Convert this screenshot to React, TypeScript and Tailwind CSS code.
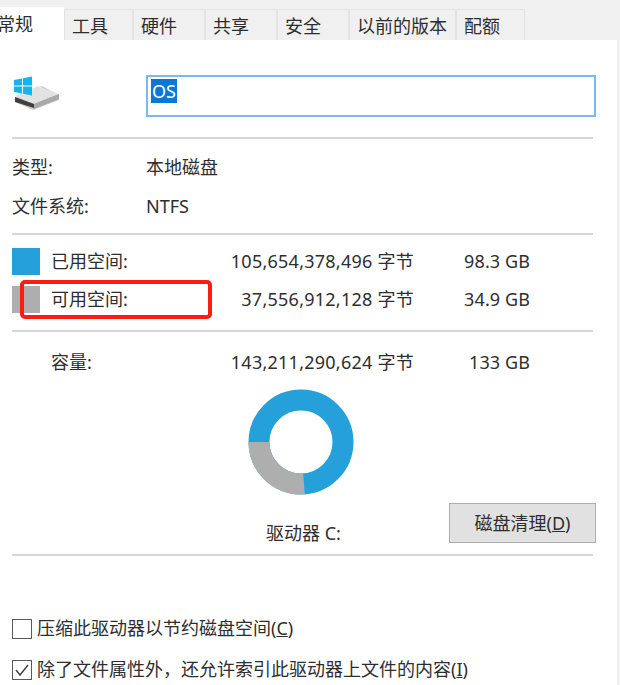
const font = { fontFamily: '"Noto Sans", "Noto Sans CJK SC", sans-serif' };

const tabs = [
  { label: '工具', w: 'w-[69px]' },
  { label: '硬件', w: 'w-[72px]' },
  { label: '共享', w: 'w-[72px]' },
  { label: '安全', w: 'w-[72px]' },
  { label: '以前的版本', w: 'w-[107px]' },
  { label: '配额', w: 'w-[69px]' },
];

function DriveIcon() {
  return (
    <svg width="46" height="34" viewBox="0 0 46 34">
      {/* drive body */}
      <path d="M1 22 L28 10 L45 19 L45 24 L19 34 L1 26 Z" fill="#c9c9c9" />
      <path d="M1 20 L24 10 L45 18 L20 28 Z" fill="#e2e2e2" />
      <path d="M1 21 L20 28 L20 32 L1 26 Z" fill="#3f3f3f" />
      <path d="M20 28 L45 18 L45 23 L20 33 Z" fill="#a9a9a9" />
      {/* windows flag */}
      <path d="M0 4 L8 2.5 L8 9.5 L0 9.5 Z" fill="#14b4ee" />
      <path d="M9 2.3 L18 0.5 L18 9.5 L9 9.5 Z" fill="#14b4ee" />
      <path d="M0 10.5 L8 10.5 L8 17.5 L0 16 Z" fill="#14b4ee" />
      <path d="M9 10.5 L18 10.5 L18 19.5 L9 17.7 Z" fill="#14b4ee" />
    </svg>
  );
}

function Donut() {
  return (
    <svg width="106" height="106" viewBox="0 0 106 106">
      <circle cx="53" cy="53" r="42" fill="none" stroke="#26a0da" strokeWidth="21" />
      <path d="M11 53 A42 42 0 0 0 56 94.9" fill="none" stroke="#aeaeae" strokeWidth="21" />
    </svg>
  );
}

function Divider() {
  return <div className="ml-3 mr-6 h-[2px] bg-[#d6d6d6]" />;
}

function SizeRow({ swatch, label, bytes, gb }: { swatch?: string; label: string; bytes: string; gb: string }) {
  return (
    <div className="flex h-[38px] items-center">
      <div className={`ml-3 h-[27px] w-[28px] ${swatch ?? ''}`} />
      <div className="ml-[11px] w-[150px]">{label}</div>
      <div className="w-[213px] text-right tracking-[0.25px]">{bytes}</div>
      <div className="w-[116px] text-right tracking-[0.1px]">{gb}</div>
    </div>
  );
}

export default function App() {
  return (
    <div style={font} className="relative h-[685px] w-[620px] overflow-hidden bg-[#f0f0f0] text-[18px] text-[#2e2e2e]">
      {/* Tabs */}
      <div className="flex h-[40px] items-end">
        <div className="flex h-[33px] w-[64px] items-center overflow-hidden bg-white pt-[2px]">
          <span className="-ml-[3px] whitespace-nowrap">常规</span>
        </div>
        {tabs.map((tab) => (
          <div
            key={tab.label}
            className={`flex h-[31px] items-center border-x border-t border-[#e3e3e3] bg-[#f0f0f0] pl-[7px] pt-[3px] ${tab.w}`}
          >
            {tab.label}
          </div>
        ))}
      </div>

      {/* Panel */}
      <div className="h-[645px] w-[617px] bg-white">
        <div className="flex h-[97px] items-center">
          <div className="ml-[14px] mt-[9px] w-[132px]">
            <DriveIcon />
          </div>
          <div className="mt-[15px] flex h-[42px] w-[450px] items-start border-2 border-[#7ab8ee] pl-[3px] pt-[2px]">
            <span className="bg-[#0a78d7] px-[1px] leading-[24px] text-white">OS</span>
          </div>
        </div>
        <Divider />

        <div className="mt-[9px] flex h-[39px] items-center pl-3">
          <div className="w-[134px]">类型:</div>
          <div>本地磁盘</div>
        </div>
        <div className="flex h-[39px] items-center pl-3">
          <div className="w-[134px]">文件系统:</div>
          <div>NTFS</div>
        </div>
        <div className="h-[7px]" />
        <Divider />

        <div className="h-[7px]" />
        <SizeRow swatch="bg-[#26a0da]" label="已用空间:" bytes="105,654,378,496 字节" gb="98.3 GB" />
        <SizeRow swatch="bg-[#aeaeae]" label="可用空间:" bytes="37,556,912,128 字节" gb="34.9 GB" />
        <div className="h-[12px]" />
        <Divider />

        <div className="h-[11px]" />
        <div className="flex h-[38px] items-center">
          <div className="ml-[51px] w-[150px]">容量:</div>
          <div className="w-[213px] text-right tracking-[0.25px]">143,211,290,624 字节</div>
          <div className="w-[116px] text-right tracking-[0.1px]">133 GB</div>
        </div>

        {/* Donut + cleanup */}
        <div className="flex h-[173px] items-start">
          <div className="flex w-[449px] flex-col items-center">
            <div className="ml-[153px] mt-[8px]">
              <Donut />
            </div>
            <div className="ml-[158px] mt-[25px]">驱动器 C:</div>
          </div>
          <div className="mt-[122px] flex h-[40px] w-[147px] items-center justify-center border border-[#adadad] bg-[#e1e1e1]">
            <span>
              磁盘清理(<span className="underline">D</span>)
            </span>
          </div>
        </div>
        <Divider />

        <div className="h-[53px]" />
        <label className="flex h-[39px] items-center pl-3">
          <span className="mr-[5px] h-[20px] w-[20px] border border-[#5a5a5a]" />
          <span>
            压缩此驱动器以节约磁盘空间(<span className="underline">C</span>)
          </span>
        </label>
        <label className="mt-[2px] flex h-[39px] items-center pl-3">
          <span className="mr-[5px] flex h-[20px] w-[20px] items-center justify-center border border-[#5a5a5a]">
            <svg width="16" height="16" viewBox="0 0 16 16">
              <path d="M2 8 L6 13 L14 3" fill="none" stroke="#444444" strokeWidth="1.5" />
            </svg>
          </span>
          <span>
            除了文件属性外，还允许索引此驱动器上文件的内容(<span className="underline">I</span>)
          </span>
        </label>
      </div>

      {/* Red annotation box */}
      <div className="absolute left-[20px] top-[280px] h-[39px] w-[192px] rounded-[5px] border-[4px] border-[#fb1d12]" />
    </div>
  );
}
